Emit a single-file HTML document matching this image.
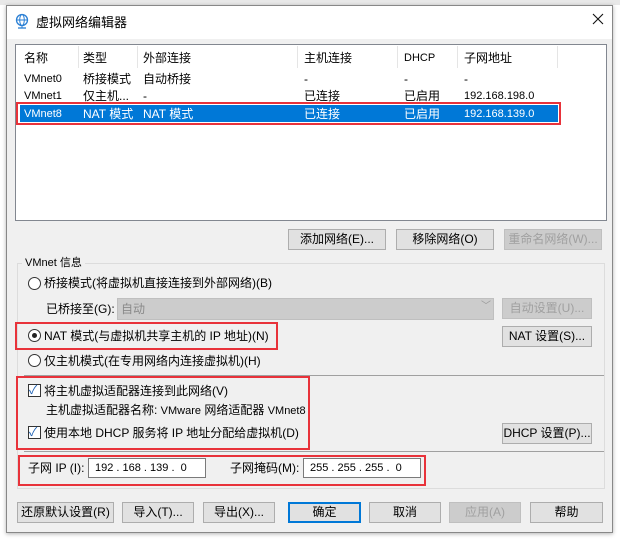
<!DOCTYPE html>
<html><head><meta charset="utf-8"><style>
*{box-sizing:border-box;margin:0;padding:0}
body{width:620px;height:543px;background:#fff;position:relative;overflow:hidden;font-family:"Liberation Sans","Noto Sans CJK SC",sans-serif;font-size:12px;color:#000}
.a{position:absolute}
.win{left:6px;top:5px;width:607px;height:528px;background:#f0f0f0;border:1px solid #888;box-shadow:0 1px 4px rgba(0,0,0,.3)}
.title{left:7px;top:6px;width:605px;height:33px;background:#fff}
.btn{position:absolute;height:21px;background:#e1e1e1;border:1px solid #adadad;text-align:center;line-height:19px;font-size:12px}
.dis{color:#a0a0a0;background:#ccc;border-color:#bfbfbf}
.red{position:absolute;border:2px solid #e8323a}
.t{position:absolute;white-space:nowrap;line-height:14px}
.radio{position:absolute;width:13px;height:13px;border:1px solid #333;border-radius:50%;background:#fff}
.cb{position:absolute;width:13px;height:13px;border:1px solid #333;background:#fff}
.sep{position:absolute;width:1px;height:22px;background:#e5e5e5;top:46px}
</style></head><body>
<div class="a" style="left:0;top:0;width:620px;height:5px;background:#e8e8e8"></div>
<div class="a win"></div>
<div class="a title"></div>
<svg class="a" style="left:15px;top:13px" width="14" height="16" viewBox="0 0 14 16"><circle cx="7" cy="7" r="5.5" fill="none" stroke="#2a7fd4" stroke-width="1.3"/><ellipse cx="7" cy="7" rx="2.3" ry="5.5" fill="none" stroke="#2a7fd4"/><line x1="1.5" y1="7" x2="12.5" y2="7" stroke="#2a7fd4"/><line x1="3" y1="15" x2="11" y2="15" stroke="#2a7fd4" stroke-width="1.3"/><line x1="7" y1="12.5" x2="7" y2="15" stroke="#2a7fd4"/></svg>
<div class="t" style="left:36px;top:16px;font-size:13px">虚拟网络编辑器</div>
<svg class="a" style="left:592px;top:13px" width="12" height="12" viewBox="0 0 12 12"><path d="M1 1L11 11M11 1L1 11" stroke="#111" stroke-width="1.1"/></svg>

<div class="a" style="left:15px;top:44px;width:592px;height:177px;background:#fff;border:1px solid #828790"></div>
<div class="sep" style="left:78px"></div><div class="sep" style="left:137px"></div><div class="sep" style="left:297px"></div><div class="sep" style="left:397px"></div><div class="sep" style="left:457px"></div><div class="sep" style="left:557px"></div>
<div class="t" style="left:24px;top:51px">名称</div><div class="t" style="left:83px;top:51px">类型</div><div class="t" style="left:143px;top:51px">外部连接</div><div class="t" style="left:304px;top:51px">主机连接</div><div class="t" style="left:404px;top:51px;font-size:11px">DHCP</div><div class="t" style="left:464px;top:51px">子网地址</div>
<div class="t" style="left:24px;top:72px;font-size:11px">VMnet0</div><div class="t" style="left:83px;top:72px">桥接模式</div><div class="t" style="left:143px;top:72px">自动桥接</div><div class="t" style="left:304px;top:72px">-</div><div class="t" style="left:404px;top:72px">-</div><div class="t" style="left:464px;top:72px">-</div>
<div class="t" style="left:24px;top:89px;font-size:11px">VMnet1</div><div class="t" style="left:83px;top:89px">仅主机...</div><div class="t" style="left:143px;top:89px">-</div><div class="t" style="left:304px;top:89px">已连接</div><div class="t" style="left:404px;top:89px">已启用</div><div class="t" style="left:464px;top:89px;font-size:11px">192.168.198.0</div>
<div class="a" style="left:20px;top:105px;width:538px;height:17px;background:#0078d7"></div>
<div class="t" style="left:24px;top:107px;font-size:11px;color:#fff">VMnet8</div><div class="t" style="left:83px;top:107px;color:#fff">NAT 模式</div><div class="t" style="left:143px;top:107px;color:#fff">NAT 模式</div><div class="t" style="left:304px;top:107px;color:#fff">已连接</div><div class="t" style="left:404px;top:107px;color:#fff">已启用</div><div class="t" style="left:464px;top:107px;font-size:11px;color:#fff">192.168.139.0</div>
<div class="red" style="left:16px;top:102px;width:545px;height:23px"></div>

<div class="btn" style="left:288px;top:229px;width:98px">添加网络(E)...</div>
<div class="btn" style="left:396px;top:229px;width:98px">移除网络(O)</div>
<div class="btn dis" style="left:504px;top:229px;width:98px">重命名网络(W)...</div>

<div class="a" style="left:17px;top:263px;width:588px;height:226px;border:1px solid #dcdcdc"></div>
<div class="t" style="left:22px;top:256px;background:#f0f0f0;padding:0 3px;font-size:11px">VMnet 信息</div>
<div class="radio" style="left:28px;top:277px"></div>
<div class="t" style="left:44px;top:276px">桥接模式(将虚拟机直接连接到外部网络)(B)</div>
<div class="t" style="left:46px;top:302px">已桥接至(G):</div>
<div class="a" style="left:117px;top:298px;width:377px;height:22px;background:#ccc;border:1px solid #bfbfbf"></div>
<div class="t" style="left:121px;top:302px;color:#8a8a8a">自动</div>
<div class="t" style="left:481px;top:300px;color:#999;font-size:10px">﹀</div>
<div class="btn dis" style="left:502px;top:298px;width:90px">自动设置(U)...</div>
<div class="radio" style="left:28px;top:329px"></div><div class="a" style="left:32px;top:333px;width:5px;height:5px;border-radius:50%;background:#222"></div>
<div class="t" style="left:44px;top:329px">NAT 模式(与虚拟机共享主机的 IP 地址)(N)</div>
<div class="red" style="left:15px;top:322px;width:263px;height:28px"></div>
<div class="btn" style="left:502px;top:326px;width:90px">NAT 设置(S)...</div>
<div class="radio" style="left:28px;top:354px"></div>
<div class="t" style="left:44px;top:354px">仅主机模式(在专用网络内连接虚拟机)(H)</div>
<div class="a" style="left:24px;top:375px;width:580px;height:1px;background:#a0a0a0"></div>
<div class="cb" style="left:28px;top:384px"></div><div class="t" style="left:29px;top:383px;color:#1a5fb4;font-size:12px">✓</div>
<div class="t" style="left:44px;top:384px">将主机虚拟适配器连接到此网络(V)</div>
<div class="t" style="left:46px;top:403px">主机虚拟适配器名称: <span style="font-size:11px">VMware</span> 网络适配器 <span style="font-size:11px">VMnet8</span></div>
<div class="cb" style="left:28px;top:426px"></div><div class="t" style="left:29px;top:425px;color:#1a5fb4">✓</div>
<div class="t" style="left:44px;top:426px">使用本地 DHCP 服务将 IP 地址分配给虚拟机(D)</div>
<div class="red" style="left:16px;top:376px;width:294px;height:74px"></div>
<div class="btn" style="left:502px;top:423px;width:90px">DHCP 设置(P)...</div>
<div class="a" style="left:24px;top:451px;width:580px;height:1px;background:#a0a0a0"></div>
<div class="t" style="left:28px;top:461px">子网 IP (I):</div>
<div class="a" style="left:88px;top:458px;width:118px;height:20px;background:#fff;border:1px solid #7a7a7a"></div>
<div class="t" style="left:95px;top:461px;font-size:11px">192 . 168 . 139 .&nbsp; 0</div>
<div class="t" style="left:230px;top:461px">子网掩码(M):</div>
<div class="a" style="left:303px;top:458px;width:118px;height:20px;background:#fff;border:1px solid #7a7a7a"></div>
<div class="t" style="left:310px;top:461px;font-size:11px">255 . 255 . 255 .&nbsp; 0</div>
<div class="red" style="left:18px;top:455px;width:408px;height:31px"></div>

<div class="btn" style="left:17px;top:502px;width:97px">还原默认设置(R)</div>
<div class="btn" style="left:122px;top:502px;width:72px">导入(T)...</div>
<div class="btn" style="left:203px;top:502px;width:72px">导出(X)...</div>
<div class="btn" style="left:288px;top:502px;width:73px;border:2px solid #0078d7;line-height:17px">确定</div>
<div class="btn" style="left:369px;top:502px;width:72px">取消</div>
<div class="btn dis" style="left:449px;top:502px;width:72px">应用(A)</div>
<div class="btn" style="left:530px;top:502px;width:73px">帮助</div>
</body></html>
